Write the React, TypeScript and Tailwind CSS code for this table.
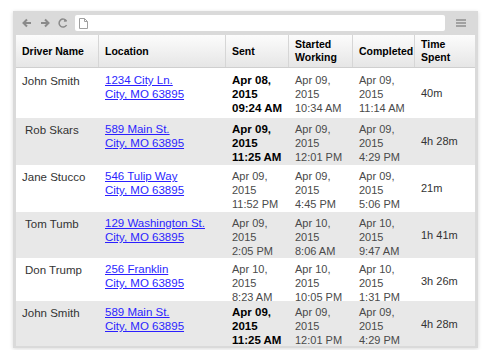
import React from 'react';

interface Stamp {
  date: string;
  year: string;
  time: string;
}

interface Job {
  driver: string;
  indent?: boolean;
  street: string;
  sent: Stamp;
  sentBold: boolean;
  started: Stamp;
  completed: Stamp;
  spent: string;
  grey: boolean;
  height: string;
}

const jobs: Job[] = [
  {
    driver: 'John Smith',
    street: '1234 City Ln.',
    sent: { date: 'Apr 08,', year: '2015', time: '09:24 AM' },
    sentBold: true,
    started: { date: 'Apr 09,', year: '2015', time: '10:34 AM' },
    completed: { date: 'Apr 09,', year: '2015', time: '11:14 AM' },
    spent: '40m',
    grey: false,
    height: 'h-[49px]',
  },
  {
    driver: 'Rob Skars',
    indent: true,
    street: '589 Main St.',
    sent: { date: 'Apr 09,', year: '2015', time: '11:25 AM' },
    sentBold: true,
    started: { date: 'Apr 09,', year: '2015', time: '12:01 PM' },
    completed: { date: 'Apr 09,', year: '2015', time: '4:29 PM' },
    spent: '4h 28m',
    grey: true,
    height: 'h-[47px]',
  },
  {
    driver: 'Jane Stucco',
    street: '546 Tulip Way',
    sent: { date: 'Apr 09,', year: '2015', time: '11:52 PM' },
    sentBold: false,
    started: { date: 'Apr 09,', year: '2015', time: '4:45 PM' },
    completed: { date: 'Apr 09,', year: '2015', time: '5:06 PM' },
    spent: '21m',
    grey: false,
    height: 'h-[47px]',
  },
  {
    driver: 'Tom Tumb',
    indent: true,
    street: '129 Washington St.',
    sent: { date: 'Apr 09,', year: '2015', time: '2:05 PM' },
    sentBold: false,
    started: { date: 'Apr 10,', year: '2015', time: '8:06 AM' },
    completed: { date: 'Apr 10,', year: '2015', time: '9:47 AM' },
    spent: '1h 41m',
    grey: true,
    height: 'h-[46px]',
  },
  {
    driver: 'Don Trump',
    indent: true,
    street: '256 Franklin',
    sent: { date: 'Apr 10,', year: '2015', time: '8:23 AM' },
    sentBold: false,
    started: { date: 'Apr 10,', year: '2015', time: '10:05 PM' },
    completed: { date: 'Apr 10,', year: '2015', time: '1:31 PM' },
    spent: '3h 26m',
    grey: false,
    height: 'h-[43px]',
  },
  {
    driver: 'John Smith',
    street: '589 Main St.',
    sent: { date: 'Apr 09,', year: '2015', time: '11:25 AM' },
    sentBold: true,
    started: { date: 'Apr 09,', year: '2015', time: '12:01 PM' },
    completed: { date: 'Apr 09,', year: '2015', time: '4:29 PM' },
    spent: '4h 28m',
    grey: true,
    height: 'h-[45px]',
  },
];

const cols = 'grid grid-cols-[83px_127px_63px_64px_62px_59px]';

const StampCell: React.FC<{ stamp: Stamp; bold?: boolean }> = ({ stamp, bold }) => (
  <div
    className={
      bold
        ? 'px-[6px] pt-[4px] text-[11.5px] leading-[14px] font-bold text-black'
        : 'px-[6px] pt-[4px] text-[11px] leading-[14px] text-[#4a4a4a]'
    }
  >
    <div>{stamp.date}</div>
    <div>{stamp.year}</div>
    <div>{stamp.time}</div>
  </div>
);

const Toolbar = () => (
  <div className="flex items-center h-[24px] pl-[5px] pr-[8px] gap-[6px]">
    <svg width="12" height="12" viewBox="0 0 12 12" className="text-[#8a8a8a]">
      <path d="M10 6H3M6 2.5L2.5 6 6 9.5" stroke="currentColor" strokeWidth="2" fill="none" />
    </svg>
    <svg width="12" height="12" viewBox="0 0 12 12" className="text-[#8a8a8a]">
      <path d="M2 6h7M6 2.5L9.5 6 6 9.5" stroke="currentColor" strokeWidth="2" fill="none" />
    </svg>
    <svg width="12" height="12" viewBox="0 0 12 12" className="text-[#8a8a8a]">
      <path d="M9.5 4A4 4 0 1 0 9.6 8" stroke="currentColor" strokeWidth="1.5" fill="none" />
      <path d="M7.5 1.5L10 4.5 6.8 4.8Z" fill="currentColor" />
    </svg>
    <div className="flex-1 h-[16px] bg-white rounded-[2px] flex items-center pl-[4px]">
      <svg width="9" height="11" viewBox="0 0 9 11">
        <path d="M0.5 0.5h5l3 3v7h-8z M5.5 0.5v3h3" stroke="#a0a0a0" strokeWidth="1" fill="#fff" />
      </svg>
    </div>
    <svg width="12" height="10" viewBox="0 0 12 10" className="ml-[4px]">
      <path d="M1 2h10M1 5h10M1 8h10" stroke="#8f8f8f" strokeWidth="1.3" />
    </svg>
  </div>
);

export default function App() {
  return (
    <div className="w-[493px] h-[350px] bg-white pt-[11px] pl-[13px] font-['Liberation_Sans',Arial,sans-serif]">
      <div className="w-[465px] h-[337px] bg-[#dadada] px-[3px] pb-[2px] shadow-[0_1px_4px_rgba(0,0,0,0.15)] flex flex-col">
        <Toolbar />
        <div className="bg-white flex-1 overflow-hidden">
          <div
            className={`${cols} h-[33px] bg-gradient-to-b from-[#fcfcfc] to-[#e6e6e6] border-b border-[#cfcfcf] text-[10.5px] leading-[13px] font-bold text-black`}
          >
            {['Driver Name', 'Location', 'Sent', 'Started Working', 'Completed', 'Time Spent'].map(
              (h, i) => (
                <div
                  key={h}
                  className={
                    i < 5
                      ? 'flex items-center px-[6px] border-r border-[#d6d6d6]'
                      : 'flex items-center px-[6px]'
                  }
                >
                  <span className={i === 3 || i === 5 ? 'w-[45px]' : ''}>{h}</span>
                </div>
              )
            )}
          </div>
          <div className="h-[1px]" />
          {jobs.map((job, i) => (
            <div key={i} className={`${cols} ${job.height} ${job.grey ? 'bg-[#e8e8e8]' : 'bg-white'}`}>
              <div
                className={`${job.indent ? 'pl-[9px]' : 'pl-[6px]'} pt-[5px] text-[11.5px] leading-[14px] text-[#333]`}
              >
                {job.driver}
              </div>
              <div className="px-[6px] pt-[4px] text-[11.5px] leading-[14px]">
                <a href="#" className="text-[#2b1fff] underline underline-offset-[1px] block w-fit">
                  {job.street}
                </a>
                <a href="#" className="text-[#2b1fff] underline underline-offset-[1px] block w-fit">
                  City, MO 63895
                </a>
              </div>
              <StampCell stamp={job.sent} bold={job.sentBold} />
              <StampCell stamp={job.started} />
              <StampCell stamp={job.completed} />
              <div className="px-[6px] flex items-center text-[11px] text-[#333]">{job.spent}</div>
            </div>
          ))}
        </div>
      </div>
    </div>
  );
}
